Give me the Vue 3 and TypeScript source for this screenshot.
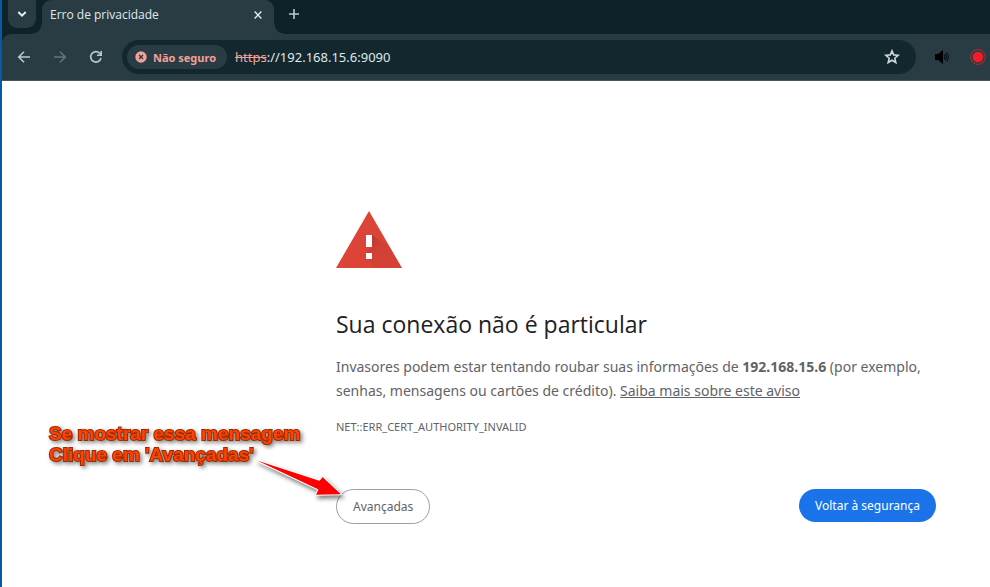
<script setup lang="ts">
import { ref } from 'vue'

const tabTitle = 'Erro de privacidade'
const host = '192.168.15.6'
const port = '9090'
const errorCode = 'NET::ERR_CERT_AUTHORITY_INVALID'
const showDetails = ref(false)
</script>

<template>
  <div class="window">
    <header class="chrome">
      <div class="tabstrip">
        <button class="tab-search" type="button" aria-label="Pesquisar guias">
          <svg width="10" height="8" viewBox="0 0 10 8"><path d="M1.300 2 5 5.700 8.700 2" fill="none" stroke="#e6eef0" stroke-width="2" /></svg>
        </button>
        <div class="tab">
          <span class="tab-title">{{ tabTitle }}</span>
          <button class="tab-close" type="button" aria-label="Fechar guia">
            <svg width="8" height="8" viewBox="0 0 8 8"><path d="M.6.6 7.4 7.4M7.4.6.6 7.4" stroke="#e1e9eb" stroke-width="1.4" /></svg>
          </button>
        </div>
        <button class="new-tab" type="button" aria-label="Nova guia">
          <svg width="10" height="10" viewBox="0 0 10 10"><path d="M5 0V10M0 5H10" stroke="#b9cace" stroke-width="1.6" /></svg>
        </button>
      </div>

      <div class="toolbar">
        <nav class="nav">
          <button type="button" aria-label="Voltar">
            <svg width="16" height="16" viewBox="0 0 16 16"><path d="M14 8H3M8 2.700 2.700 8 8 13.300" fill="none" stroke="#b5cad1" stroke-width="1.6" /></svg>
          </button>
          <button type="button" aria-label="Avançar" disabled>
            <svg width="16" height="16" viewBox="0 0 16 16"><path d="M2 8H13M8 2.700 13.300 8 8 13.300" fill="none" stroke="#62757c" stroke-width="1.6" /></svg>
          </button>
          <button type="button" aria-label="Recarregar">
            <svg width="16" height="16" viewBox="0 0 16 16"><path d="M13 9A5.200 5.200 0 1 1 11.800 4.400L13 5.700" fill="none" stroke="#b5cad1" stroke-width="1.6" /><path d="M14 2V7H9V5.500H12.400V2Z" fill="#b5cad1" /></svg>
          </button>
        </nav>
        <div class="omnibox">
          <button class="security" type="button">
            <svg width="12" height="12" viewBox="0 0 12 12"><circle cx="6" cy="6" r="5.7" fill="#f2a098" /><path d="M4 4 8 8M8 4 4 8" stroke="#293c44" stroke-width="1.4" /></svg>
            Não seguro
          </button>
          <span class="url"><s>https</s>://{{ host }}:{{ port }}</span>
          <button class="star" type="button" aria-label="Adicionar aos favoritos">
            <svg width="16" height="16" viewBox="0 0 16 16"><path d="M8 1.900 9.700 5.900 14.200 6.300 10.800 9.200 11.800 13.500 8 11.200 4.200 13.500 5.200 9.200 1.800 6.300 6.300 5.900Z" fill="none" stroke="#cdd8da" stroke-width="1.6" /></svg>
          </button>
        </div>
        <div class="extensions">
          <button type="button" aria-label="Volume">
            <svg width="16" height="16" viewBox="0 0 16 16"><path d="M1 5H4L9 1V15L4 11H1Z" fill="#000" /><path d="M10.300 5.600Q11.700 8 10.300 10.400M11.500 4.500Q13.400 8 11.500 11.500M12.700 3.400Q16 8 12.700 12.600" fill="none" stroke="#000" stroke-width="0.8" /></svg>
          </button>
          <button type="button" aria-label="Gravar">
            <svg width="16" height="16" viewBox="0 0 16 16"><circle cx="8" cy="8" r="7.4" fill="none" stroke="#d3232c" stroke-width="0.9" /><circle cx="8" cy="8" r="5.3" fill="#f31c24" /></svg>
          </button>
        </div>
      </div>
    </header>

    <main class="page">
      <section class="interstitial">
        <svg class="warning" width="66" height="58" viewBox="0 0 66 58" role="img" aria-label="Alerta">
          <defs>
            <linearGradient id="fold" gradientUnits="userSpaceOnUse" x1="34" y1="26" x2="56" y2="48">
              <stop offset="0" stop-color="#6b2820" stop-opacity="0.38" />
              <stop offset="0.45" stop-color="#a03328" stop-opacity="0.16" />
              <stop offset="1" stop-color="#a03328" stop-opacity="0.12" />
            </linearGradient>
          </defs>
          <path d="M33 0 66 57H0Z" fill="#db4437" />
          <path d="M36 24 53 35 66 57H39L30 48H36V42H30L36 36Z" fill="url(#fold)" />
          <path d="M30 24H36V36H30ZM30 42H36V48H30Z" fill="#fff" />
        </svg>
        <h1>Sua conexão não é particular</h1>
        <p class="message">
          Invasores podem estar tentando roubar suas informações de <strong>{{ host }}</strong> (por exemplo,
          senhas, mensagens ou cartões de crédito). <a href="#aviso">Saiba mais sobre este aviso</a>
        </p>
        <p class="code">{{ errorCode }}</p>
        <div class="actions">
          <button class="secondary" type="button" :aria-expanded="showDetails" @click="showDetails = !showDetails">Avançadas</button>
          <button class="primary" type="button">Voltar à segurança</button>
        </div>
      </section>

      <aside class="callout">
        <p>Se mostrar essa mensagem<br />Clique em 'Avançadas'</p>
        <svg class="arrow" width="100" height="56" viewBox="0 0 100 56" aria-hidden="true">
          <path d="M7 10.500 68 30.500 72.500 27 91 44.300 66 44.800 68.500 39.500Z" fill="#fe0000" stroke="#fff" stroke-width="2" stroke-linejoin="round" />
          <path d="M7 10.500 70 31 72.500 27 91 44.300 66 44.800 68.500 39.500Z" fill="#fe0000" />
        </svg>
      </aside>
    </main>
  </div>
</template>

<style>
body {
  margin: 0;
  background: #fff;
}
</style>

<style scoped>
.window {
  position: relative;
  min-height: 100vh;
  box-sizing: border-box;
  border-left: 2px solid #0659a5;
  overflow: hidden;
  font-family: "Noto Sans", "Open Sans", sans-serif;
}

button {
  margin: 0;
  padding: 0;
  border: 0;
  background: none;
  font-family: inherit;
  display: flex;
  align-items: center;
  justify-content: center;
}

svg {
  display: block;
  flex: none;
}

.chrome {
  background: #0d2229;
}

.tabstrip {
  display: flex;
  height: 34px;
  padding-left: 6px;
}

.tab-search {
  width: 28px;
  height: 28px;
  border-radius: 0 0 9px 9px;
  background: #293c44;
}

.tab {
  position: relative;
  display: flex;
  align-items: center;
  justify-content: space-between;
  box-sizing: border-box;
  width: 232px;
  margin-left: 6px;
  padding: 0 12px 4px 8px;
  border-radius: 9px 9px 0 0;
  background: #293c44;
}

.tab::before,
.tab::after {
  content: "";
  position: absolute;
  bottom: 0;
  width: 10px;
  height: 10px;
}

.tab::before {
  right: 100%;
  background: radial-gradient(circle at 0 0, transparent 9px, #293c44 10px);
}

.tab::after {
  left: 100%;
  background: radial-gradient(circle at 100% 0, transparent 9px, #293c44 10px);
}

.tab-title {
  color: #e1e9eb;
  font-family: "Open Sans", sans-serif;
  font-size: 12px;
  line-height: 16px;
}

.new-tab {
  width: 28px;
  height: 28px;
  margin-left: 6px;
}

.toolbar {
  display: flex;
  align-items: center;
  height: 46px;
  padding-right: 4px;
  border-bottom: 1px solid #46565d;
  border-radius: 9px 0 0 0;
  background: #293c44;
}

.nav {
  display: flex;
  gap: 20px;
  padding-left: 14px;
}

.omnibox {
  display: flex;
  flex: 1;
  align-items: center;
  box-sizing: border-box;
  height: 34px;
  margin-left: 18px;
  padding: 0 16px 0 5px;
  border-radius: 17px;
  background: #13282e;
}

.security {
  gap: 6px;
  height: 24px;
  padding: 0 11px 0 8px;
  border-radius: 12px;
  background: #293c44;
  color: #f2a098;
  font-size: 11px;
  font-weight: 700;
}

.url {
  flex: 1;
  margin-left: 8px;
  color: #dfe8ea;
  font-size: 13px;
  line-height: 20px;
}

.url s {
  color: #f2a098;
}

.extensions {
  display: flex;
  gap: 20px;
  margin-left: 18px;
}

.page {
  background: #fff;
}

.interstitial {
  max-width: 600px;
  margin-left: 334px;
  padding-top: 130px;
  color: #5f6368;
}

h1 {
  margin: 39px 0 15px;
  color: #202124;
  font-family: "Open Sans", sans-serif;
  font-size: 23px;
  font-weight: 400;
  line-height: 32px;
}

.message {
  margin: 0;
  font-size: 14px;
  line-height: 24px;
}

.message a {
  color: inherit;
}

.code {
  margin: 14px 0 0;
  font-size: 11px;
  line-height: 20px;
}

.actions {
  display: flex;
  align-items: flex-start;
  justify-content: space-between;
  margin-top: 52px;
}

.actions button {
  height: 33px;
  padding: 0 16px;
  border-radius: 18px;
  font-size: 12px;
}

.actions .secondary {
  height: 35px;
  border: 1px solid #9aa0a6;
  background: #fff;
  color: #5f6368;
}

.actions .primary {
  background: #1a73e8;
  color: #fff;
}

.callout {
  position: absolute;
  left: 47px;
  top: 423px;
}

.callout p {
  margin: 0;
  color: #ff4200;
  font-family: "Liberation Sans", Arial, sans-serif;
  font-size: 19px;
  font-weight: 700;
  line-height: 21px;
  white-space: nowrap;
  -webkit-text-stroke: 2px #9c2a00;
  paint-order: stroke fill;
  filter: drop-shadow(2px 2px 2px rgba(0, 0, 0, 0.5));
}

.arrow {
  position: absolute;
  left: 201px;
  top: 27px;
  filter: drop-shadow(2px 3px 2px rgba(0, 0, 0, 0.5));
}
</style>
